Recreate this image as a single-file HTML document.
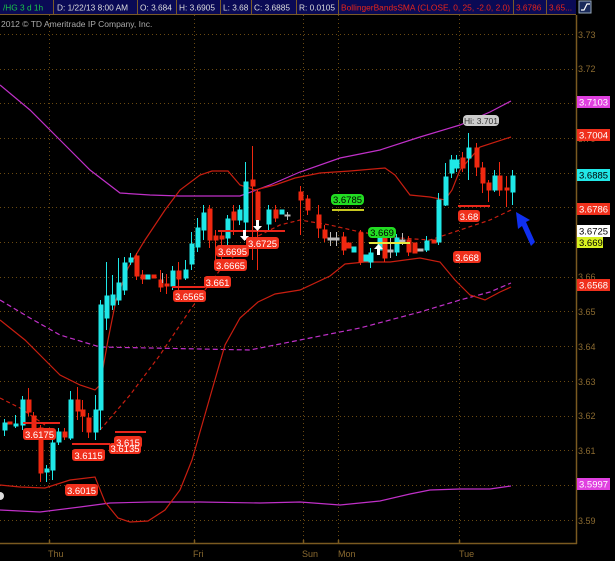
<!DOCTYPE html>
<html><head><meta charset="utf-8"><style>
html,body{margin:0;padding:0;background:#000;width:615px;height:561px;overflow:hidden;font-family:"Liberation Sans","DejaVu Sans",sans-serif}
svg{display:block}
</style></head><body>
<svg width="615" height="561" viewBox="0 0 615 561" xmlns="http://www.w3.org/2000/svg" font-family="Liberation Sans, DejaVu Sans, sans-serif">
<rect width="615" height="561" fill="#000"/>
<rect x="0" y="0" width="576" height="14" fill="#0a0a55"/>
<g stroke="#7a5a28" stroke-width="1">
<line x1="53.5" y1="0" x2="53.5" y2="14"/><line x1="137.5" y1="0" x2="137.5" y2="14"/><line x1="176.5" y1="0" x2="176.5" y2="14"/>
<line x1="220.5" y1="0" x2="220.5" y2="14"/><line x1="251.5" y1="0" x2="251.5" y2="14"/><line x1="296.5" y1="0" x2="296.5" y2="14"/>
<line x1="338.5" y1="0" x2="338.5" y2="14"/><line x1="513.5" y1="0" x2="513.5" y2="14"/><line x1="546.5" y1="0" x2="546.5" y2="14"/>
<line x1="0" y1="14.5" x2="576" y2="14.5"/>
</g>
<g font-size="8.3" fill="#ddd">
<text x="3" y="10.5" fill="#19c84a">/HG 3 d 1h</text>
<text x="57" y="10.5">D: 1/22/13 8:00 AM</text>
<text x="140" y="10.5">O: 3.684</text>
<text x="179" y="10.5">H: 3.6905</text>
<text x="223" y="10.5">L: 3.68</text>
<text x="254" y="10.5">C: 3.6885</text>
<text x="299" y="10.5">R: 0.0105</text>
<text x="341" y="10.5" fill="#e8251a" textLength="169" lengthAdjust="spacingAndGlyphs">BollingerBandsSMA (CLOSE, 0, 25, -2.0, 2.0)</text>
<text x="516" y="10.5" fill="#e8251a">3.6786</text>
<text x="549" y="10.5" fill="#e8251a">3.65...</text>
</g>
<rect x="579" y="1" width="12" height="12" fill="#1a2a5a" stroke="#9ab" stroke-width="1"/>
<path d="M581 10h3l3-6h3" stroke="#fff" fill="none" stroke-width="1.2"/>
<text x="1" y="27" font-size="8.5" fill="#aaa">2012 © TD Ameritrade IP Company, Inc.</text>

<g stroke="#6a4a12" stroke-width="1" stroke-dasharray="1,3">
<line x1="0" y1="34.5" x2="576" y2="34.5"/><line x1="0" y1="69.5" x2="576" y2="69.5"/><line x1="0" y1="103.5" x2="576" y2="103.5"/>
<line x1="0" y1="138.5" x2="576" y2="138.5"/><line x1="0" y1="173.5" x2="576" y2="173.5"/><line x1="0" y1="207.5" x2="576" y2="207.5"/>
<line x1="0" y1="242.5" x2="576" y2="242.5"/><line x1="0" y1="277.5" x2="576" y2="277.5"/><line x1="0" y1="311.5" x2="576" y2="311.5"/>
<line x1="0" y1="346.5" x2="576" y2="346.5"/><line x1="0" y1="381.5" x2="576" y2="381.5"/><line x1="0" y1="416.5" x2="576" y2="416.5"/>
<line x1="0" y1="450.5" x2="576" y2="450.5"/><line x1="0" y1="485.5" x2="576" y2="485.5"/><line x1="0" y1="520.5" x2="576" y2="520.5"/>
<line x1="49.5" y1="15" x2="49.5" y2="543"/><line x1="194.5" y1="15" x2="194.5" y2="543"/><line x1="303.5" y1="15" x2="303.5" y2="543"/>
<line x1="338.5" y1="15" x2="338.5" y2="543"/><line x1="459.5" y1="15" x2="459.5" y2="543"/>
</g>
<g stroke="#7a5a20" stroke-width="1.5">
<line x1="576.5" y1="15" x2="576.5" y2="544"/><line x1="0" y1="543.5" x2="577" y2="543.5"/>
<line x1="49.5" y1="540" x2="49.5" y2="544"/><line x1="194.5" y1="540" x2="194.5" y2="544"/><line x1="303.5" y1="540" x2="303.5" y2="544"/><line x1="338.5" y1="540" x2="338.5" y2="544"/><line x1="459.5" y1="540" x2="459.5" y2="544"/>
</g>
<g font-size="9" fill="#8a6a30">
<text x="48" y="557">Thu</text><text x="193" y="557">Fri</text><text x="302" y="557">Sun</text><text x="338" y="557">Mon</text><text x="459" y="557">Tue</text>
<text x="578" y="38">3.73</text><text x="578" y="72">3.72</text><text x="578" y="142">3.70</text><text x="578" y="315">3.65</text>
<text x="578" y="350">3.64</text><text x="578" y="385">3.63</text><text x="578" y="419">3.62</text><text x="578" y="454">3.61</text><text x="578" y="524">3.59</text><text x="578" y="280">3.66</text>
</g>

<g fill="none" stroke-width="1.2">
<polyline stroke="#c030c8" points="0,85 30,110 60,140 90,170 120,193 150,195 180,196 210,196 240,196 270,185 300,172 340,158 380,150 420,137 460,125 490,112 511,101"/>
<polyline stroke="#c030c8" points="0,510 40,512 80,507 110,503 150,502 200,502 260,503 300,502 340,505 380,501 410,494 430,490 460,489 490,489 511,486"/>
<polyline stroke="#c030c8" stroke-dasharray="5,3" points="0,300 30,318 60,335 100,347 150,348 200,349 250,350 300,340 360,328 420,312 460,300 490,292 511,283"/>
<polyline stroke="#c81e10" points="0,320 25,340 45,360 60,375 80,385 95,390 100,385 108,340 116,300 128,268 145,240 165,210 180,190 200,175 212,171 228,171 240,185 255,190 275,185 295,178 320,173 350,171 385,168 395,175 410,195 430,197 445,200 452,190 460,170 480,147 511,137"/>
<polyline stroke="#c81e10" points="0,485 20,487 45,488 70,480 95,477 105,502 118,518 130,522 148,521 165,510 180,490 192,460 200,432 212,390 225,345 240,318 258,302 275,294 300,290 330,276 345,264 365,262 390,262 420,258 440,262 455,280 470,295 485,300 500,292 511,287"/>
<polyline stroke="#c81e10" stroke-dasharray="4,3" points="0,398 20,408 45,425"/>
<polyline stroke="#c81e10" stroke-dasharray="4,3" points="100,430 130,395 160,355 190,310 220,270 250,240 280,225 300,220 330,225 360,232 400,238 430,240 460,230 490,220 511,210"/>
</g>

<g stroke-width="1">
<g stroke="#1fe8e8" fill="#1fe8e8">
<line x1="4.5" y1="419" x2="4.5" y2="436"/><rect x="3" y="423" width="4" height="7"/>
<line x1="15.5" y1="415" x2="15.5" y2="428"/><rect x="14" y="424" width="4" height="2"/>
<line x1="22.5" y1="396" x2="22.5" y2="430"/><rect x="21" y="400" width="4" height="25"/>
<line x1="46.5" y1="465" x2="46.5" y2="482"/><rect x="45" y="469" width="4" height="3"/>
<line x1="52.5" y1="440" x2="52.5" y2="480"/><rect x="51" y="443" width="4" height="27"/>
<line x1="58.5" y1="428" x2="58.5" y2="445"/><rect x="57" y="432" width="4" height="10"/>
<line x1="70.5" y1="391" x2="70.5" y2="440"/><rect x="69" y="400" width="4" height="38"/>
<line x1="95.5" y1="395" x2="95.5" y2="440"/><rect x="94" y="410" width="4" height="22"/>
<line x1="100.5" y1="300" x2="100.5" y2="430"/><rect x="99" y="305" width="4" height="105"/>
<line x1="106.5" y1="262" x2="106.5" y2="330"/><rect x="105" y="296" width="4" height="22"/>
<line x1="112.5" y1="275" x2="112.5" y2="310"/><rect x="111" y="295" width="4" height="10"/>
<line x1="118.5" y1="258" x2="118.5" y2="305"/><rect x="117" y="283" width="4" height="17"/>
<line x1="124.5" y1="257" x2="124.5" y2="295"/><rect x="123" y="263" width="4" height="27"/>
<line x1="130.5" y1="253" x2="130.5" y2="265"/><rect x="129" y="258" width="4" height="4"/>
<rect x="146" y="275" width="4" height="4"/>
<line x1="172.5" y1="266" x2="172.5" y2="290"/><rect x="171" y="271" width="4" height="15"/>
<line x1="185.5" y1="260" x2="185.5" y2="280"/><rect x="184" y="270" width="4" height="8"/>
<line x1="191.5" y1="232" x2="191.5" y2="270"/><rect x="190" y="244" width="4" height="20"/>
<line x1="197.5" y1="218" x2="197.5" y2="252"/><rect x="196" y="228" width="4" height="19"/>
<line x1="203.5" y1="205" x2="203.5" y2="240"/><rect x="202" y="213" width="4" height="17"/>
<line x1="227.5" y1="215" x2="227.5" y2="245"/><rect x="226" y="219" width="4" height="19"/>
<line x1="239.5" y1="205" x2="239.5" y2="225"/><rect x="238" y="210" width="4" height="10"/>
<line x1="245.5" y1="162" x2="245.5" y2="240"/><rect x="244" y="182" width="4" height="40"/>
<line x1="268.5" y1="205" x2="268.5" y2="230"/><rect x="267" y="210" width="4" height="14"/>
<rect x="280" y="210" width="4" height="4"/>
<rect x="352" y="247" width="4" height="5"/>
<rect x="364" y="255" width="4" height="6"/>
<line x1="370.5" y1="248" x2="370.5" y2="268"/><rect x="369" y="253" width="4" height="9"/>
<line x1="379.5" y1="232" x2="379.5" y2="255"/><rect x="378" y="236" width="4" height="14"/>
<line x1="396.5" y1="234" x2="396.5" y2="256"/><rect x="395" y="238" width="4" height="14"/>
<line x1="426.5" y1="236" x2="426.5" y2="252"/><rect x="425" y="241" width="4" height="9"/>
<line x1="438.5" y1="193" x2="438.5" y2="245"/><rect x="437" y="200" width="4" height="42"/>
<line x1="445.5" y1="163" x2="445.5" y2="206"/><rect x="444" y="177" width="4" height="28"/>
<line x1="451.5" y1="155" x2="451.5" y2="178"/><rect x="450" y="160" width="4" height="13"/>
<line x1="456.5" y1="155" x2="456.5" y2="172"/><rect x="455" y="160" width="4" height="8"/>
<line x1="468.5" y1="133" x2="468.5" y2="180"/><rect x="467" y="148" width="4" height="10"/>
<line x1="494.5" y1="170" x2="494.5" y2="192"/><rect x="493" y="176" width="4" height="14"/>
<line x1="512.5" y1="170" x2="512.5" y2="205"/><rect x="511" y="176" width="4" height="16"/>
</g>
<g stroke="#f02810" fill="#f02810">
<rect x="8" y="422" width="4" height="2"/>
<line x1="28.5" y1="388" x2="28.5" y2="416"/><rect x="27" y="400" width="4" height="12"/>
<line x1="33.5" y1="412" x2="33.5" y2="432"/><rect x="32" y="416" width="4" height="14"/>
<line x1="40.5" y1="425" x2="40.5" y2="482"/><rect x="39" y="428" width="4" height="45"/>
<line x1="64.5" y1="428" x2="64.5" y2="440"/><rect x="63" y="432" width="4" height="5"/>
<line x1="77.5" y1="387" x2="77.5" y2="420"/><rect x="76" y="400" width="4" height="11"/>
<line x1="82.5" y1="400" x2="82.5" y2="432"/><rect x="81" y="410" width="4" height="6"/>
<line x1="88.5" y1="413" x2="88.5" y2="438"/><rect x="87" y="418" width="4" height="14"/>
<line x1="136.5" y1="253" x2="136.5" y2="280"/><rect x="135" y="256" width="4" height="20"/>
<line x1="142.5" y1="270" x2="142.5" y2="284"/><rect x="141" y="275" width="4" height="4"/>
<rect x="152" y="275" width="4" height="3"/>
<line x1="160.5" y1="270" x2="160.5" y2="292"/><rect x="159" y="280" width="4" height="7"/>
<line x1="166.5" y1="274" x2="166.5" y2="294"/><rect x="165" y="284" width="4" height="2"/>
<line x1="178.5" y1="262" x2="178.5" y2="290"/><rect x="177" y="271" width="4" height="8"/>
<line x1="209.5" y1="205" x2="209.5" y2="248"/><rect x="208" y="209" width="4" height="31"/>
<line x1="215.5" y1="230" x2="215.5" y2="270"/><rect x="214" y="236" width="4" height="4"/>
<line x1="221.5" y1="230" x2="221.5" y2="262"/><rect x="220" y="236" width="4" height="3"/>
<line x1="233.5" y1="205" x2="233.5" y2="235"/><rect x="232" y="212" width="4" height="8"/>
<line x1="252.5" y1="146" x2="252.5" y2="260"/><rect x="251" y="180" width="4" height="6"/>
<line x1="257.5" y1="190" x2="257.5" y2="270"/><rect x="256" y="192" width="4" height="28"/>
<line x1="275.5" y1="205" x2="275.5" y2="222"/><rect x="274" y="210" width="4" height="8"/>
<line x1="300.5" y1="186" x2="300.5" y2="235"/><rect x="299" y="192" width="4" height="8"/>
<line x1="307.5" y1="195" x2="307.5" y2="215"/><rect x="306" y="199" width="4" height="11"/>
<line x1="318.5" y1="205" x2="318.5" y2="238"/><rect x="317" y="215" width="4" height="13"/>
<line x1="324.5" y1="225" x2="324.5" y2="242"/><rect x="323" y="230" width="4" height="8"/>
<line x1="343.5" y1="232" x2="343.5" y2="255"/><rect x="342" y="237" width="4" height="13"/>
<rect x="347" y="243" width="4" height="5"/>
<line x1="360.5" y1="230" x2="360.5" y2="265"/><rect x="359" y="233" width="4" height="29"/>
<line x1="384.5" y1="234" x2="384.5" y2="262"/><rect x="383" y="236" width="4" height="22"/>
<line x1="408.5" y1="236" x2="408.5" y2="256"/><rect x="407" y="240" width="4" height="12"/>
<rect x="413" y="243" width="4" height="10"/>
<rect x="432" y="240" width="4" height="3"/>
<line x1="462.5" y1="152" x2="462.5" y2="172"/><rect x="461" y="158" width="4" height="10"/>
<line x1="476.5" y1="143" x2="476.5" y2="176"/><rect x="475" y="148" width="4" height="19"/>
<line x1="482.5" y1="162" x2="482.5" y2="193"/><rect x="481" y="168" width="4" height="15"/>
<line x1="488.5" y1="180" x2="488.5" y2="202"/><rect x="487" y="183" width="4" height="7"/>
<line x1="499.5" y1="162" x2="499.5" y2="196"/><rect x="498" y="176" width="4" height="14"/>
<line x1="506.5" y1="176" x2="506.5" y2="207"/><rect x="505" y="188" width="4" height="2"/>
</g>
<g stroke="#bbb" fill="#bbb">
<line x1="162.5" y1="273" x2="162.5" y2="283"/><line x1="287.5" y1="212" x2="287.5" y2="220"/><rect x="285" y="215" width="5" height="1"/>
<line x1="330.5" y1="232" x2="330.5" y2="246"/><rect x="328" y="238" width="5" height="2"/>
<line x1="336.5" y1="232" x2="336.5" y2="246"/><rect x="334" y="238" width="5" height="2"/>
<line x1="390.5" y1="234" x2="390.5" y2="258"/><rect x="388" y="250" width="5" height="2"/>
<line x1="402.5" y1="233" x2="402.5" y2="245"/><rect x="400" y="240" width="5" height="2"/>
<rect x="418" y="249" width="5" height="2"/>
</g>
</g>

<g stroke-width="2">
<line x1="23" y1="423" x2="60" y2="423" stroke="#e8251a"/>
<line x1="72" y1="444" x2="110" y2="444" stroke="#e8251a"/>
<line x1="115" y1="432" x2="146" y2="432" stroke="#e8251a"/>
<line x1="172" y1="287" x2="205" y2="287" stroke="#e8251a"/>
<line x1="218" y1="231" x2="285" y2="231" stroke="#e8251a"/>
<line x1="458" y1="206" x2="490" y2="206" stroke="#e8251a"/>
<line x1="332" y1="210" x2="364" y2="210" stroke="#c8c820"/>
<line x1="369" y1="243" x2="410" y2="243" stroke="#e8e840"/>
</g>
<g fill="#fff">
<path d="M243 230h3v6h3l-4.5 5-4.5-5h3z"/>
<path d="M256 220h3v6h3l-4.5 5-4.5-5h3z"/>
<path d="M377 255h3v-6h3l-4.5-5-4.5 5h3z"/>
</g>

<g font-size="9.5" fill="#fff" text-anchor="middle">
<g fill="#f0301c"><rect x="23" y="428" width="33" height="12" rx="3"/><rect x="72" y="449" width="33" height="12" rx="3"/><rect x="65" y="484" width="33" height="12" rx="3"/>
<rect x="109" y="443" width="32" height="11" rx="3"/><rect x="114" y="436" width="28" height="12" rx="3"/>
<rect x="173" y="290" width="33" height="12" rx="3"/><rect x="204" y="276" width="27" height="12" rx="3"/>
<rect x="214" y="259" width="33" height="12" rx="3"/><rect x="216" y="245" width="33" height="12" rx="3"/><rect x="246" y="237" width="33" height="12" rx="3"/>
<rect x="458" y="210" width="22" height="12" rx="3"/><rect x="453" y="251" width="28" height="12" rx="3"/></g>
<text x="39.5" y="438">3.6175</text><text x="88.5" y="459">3.6115</text><text x="81.5" y="494">3.6015</text>
<text x="125" y="452">3.6135</text><text x="128" y="446">3.615</text>
<text x="189.5" y="300">3.6565</text><text x="217.5" y="286">3.661</text><text x="230.5" y="269">3.6665</text>
<text x="232.5" y="255">3.6695</text><text x="262.5" y="247">3.6725</text><text x="469" y="220">3.68</text><text x="467" y="261">3.668</text>
<rect x="331" y="194" width="33" height="11" rx="4" fill="#22dd22"/><text x="347.5" y="203" fill="#000">3.6785</text>
<rect x="368" y="227" width="28" height="11" rx="4" fill="#22dd22"/><text x="382" y="236" fill="#000">3.669</text>
<rect x="463" y="115" width="36" height="11" rx="4" fill="#ccc"/><text x="481" y="124" fill="#333" font-size="8.5">Hi: 3.701</text>
</g>
<circle cx="0" cy="496" r="4" fill="#ddd"/>

<g font-size="9.5" text-anchor="start">
<rect x="577" y="96" width="33" height="12" fill="#e040e0"/><text x="579" y="105.5" fill="#fff">3.7103</text>
<rect x="577" y="129" width="33" height="12" fill="#f0301c"/><text x="579" y="138.5" fill="#fff">3.7004</text>
<rect x="577" y="169" width="33" height="12" fill="#22e8e8"/><text x="579" y="178.5" fill="#000">3.6885</text>
<rect x="577" y="203" width="33" height="12" fill="#f0301c"/><text x="579" y="212.5" fill="#fff">3.6786</text>
<rect x="577" y="225" width="33" height="12" fill="#fff"/><text x="579" y="234.5" fill="#000">3.6725</text>
<rect x="577" y="237" width="26" height="11" fill="#d8f020"/><text x="579" y="246" fill="#000">3.669</text>
<rect x="577" y="279" width="33" height="12" fill="#f0301c"/><text x="579" y="288.5" fill="#fff">3.6568</text>
<rect x="577" y="478" width="33" height="12" fill="#e040e0"/><text x="579" y="487.5" fill="#fff">3.5997</text>
</g>

<path d="M531 246 L522 226 L518 229 L516 212 L530 220 L526 222 L535 242 Z" fill="#1030f0"/>
</svg>
</body></html>
